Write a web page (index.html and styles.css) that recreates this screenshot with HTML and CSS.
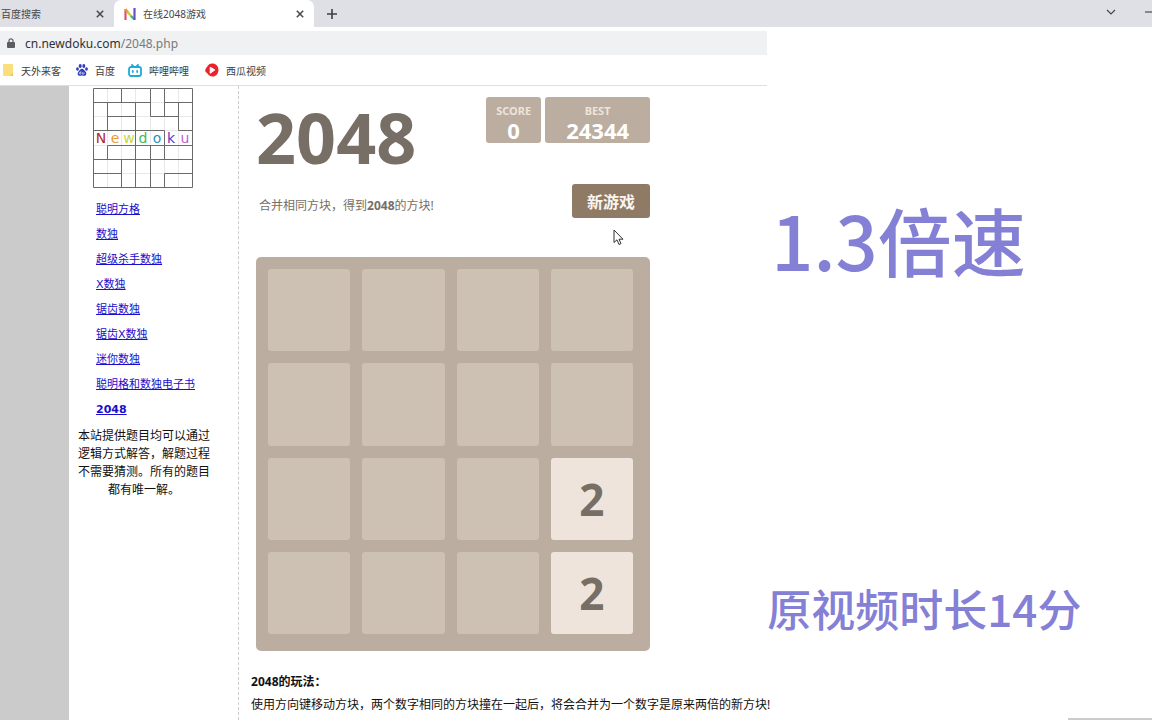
FILE: index.html
```html
<!DOCTYPE html>
<html lang="zh-CN">
<head>
<meta charset="utf-8">
<title>在线2048游戏</title>
<link rel="stylesheet" href="styles.css">
</head>
<body>
<header class="tabbar">
  <div class="tab tab-left"><span class="tab-title">百度搜索</span>
    <button class="icon-btn" aria-label="关闭标签页"><svg width="8" height="8" viewBox="0 0 8 8"><path d="M.8.8l6.4 6.4M7.2.8L.8 7.2" stroke="#45474b" stroke-width="1.5"/></svg></button>
  </div>
  <div class="tab tab-active">
    <svg class="favicon" width="12" height="12" viewBox="0 0 12 12"><path d="M1.500 12V1" stroke="#e0506a" stroke-width="2.200"/><path d="M1.500 1l3 4" stroke="#f0a030" stroke-width="2.200"/><path d="M4 4.500l3.500 4" stroke="#c8cf3c" stroke-width="2.200"/><path d="M7 8l3.500 3.500" stroke="#3dae8c" stroke-width="2.200"/><path d="M10.500 12V0" stroke="#6a50c0" stroke-width="2.200"/></svg>
    <span class="tab-title">在线2048游戏</span>
    <button class="icon-btn" aria-label="关闭标签页"><svg width="8" height="8" viewBox="0 0 8 8"><path d="M.8.8l6.400 6.400M7.200.8L.8 7.200" stroke="#45474b" stroke-width="1.500"/></svg></button>
  </div>
  <button class="icon-btn new-tab" aria-label="新标签页"><svg width="10" height="10" viewBox="0 0 10 10"><path d="M5 0v10M0 5h10" stroke="#3c3e42" stroke-width="1.600"/></svg></button>
  <div class="window-controls">
    <button class="icon-btn" aria-label="搜索标签页"><svg width="10" height="6" viewBox="0 0 10 6"><path d="M1 1l4 4 4-4" fill="none" stroke="#45474b" stroke-width="1.200"/></svg></button>
    <button class="icon-btn" aria-label="最小化"><svg width="7" height="6" viewBox="0 0 7 6"><path d="M0 3h7" stroke="#55575c" stroke-width="1.300"/></svg></button>
  </div>
</header>
<div class="stage">
  <div class="browser">
    <div class="address">
      <svg width="8" height="10" viewBox="0 0 8 10"><rect y="4" width="8" height="6" rx="1" fill="#5a5d61"/><path d="M2 4.500V2.800a2 2 0 0 1 4 0v1.700" fill="none" stroke="#5a5d61" stroke-width="1.200"/></svg>
      <span class="url">cn.newdoku.com<span class="url-path">/2048.php</span></span>
    </div>
    <nav class="bookmarks">
      <a href="#" class="bm bm-folder"><svg width="10" height="12" viewBox="0 0 10 12"><rect width="10" height="12" rx="1" fill="#fbdf7c"/><path d="M6.500 12h3.500V9z" fill="#eec75c"/></svg>天外来客</a>
      <a href="#" class="bm bm-baidu"><svg width="12" height="12" viewBox="0 0 12 12" fill="#2f3cc0"><ellipse cx="4.200" cy="2" rx="1.500" ry="2"/><ellipse cx="7.800" cy="2" rx="1.500" ry="2"/><ellipse cx="1.500" cy="5" rx="1.400" ry="1.800"/><ellipse cx="10.500" cy="5" rx="1.400" ry="1.800"/><path d="M6 4.700c1.600 0 2.200 1.600 3.400 2.700 1.700 1.600 1 4.400-1.200 4.400-1 0-1.300-.3-2.200-.3s-1.200.3-2.200.3c-2.200 0-2.900-2.800-1.200-4.400C3.800 6.300 4.400 4.700 6 4.700z"/><path d="M4.900 7.200v2.900H4a.8.8 0 0 1 0-1.700h.9M6.500 8.200v1.900H8V8.200" stroke="#fff" stroke-width=".6" fill="none"/></svg>百度</a>
      <a href="#" class="bm bm-bili"><svg width="14" height="13" viewBox="0 0 14 13" fill="none" stroke="#22a9d6" stroke-width="1.800" stroke-linecap="round"><rect x="1" y="3" width="12" height="9" rx="2"/><path d="M4 1l1.500 1.500M10 1L8.500 2.500M4.800 6.800v1.200M9.200 6.800v1.200"/></svg>哔哩哔哩</a>
      <a href="#" class="bm"><svg width="14" height="14" viewBox="0 0 14 14"><path d="M7 .5C11 .5 13.500 3.200 13.500 7S10.500 13.700 7.500 13.500C3.500 13.300 2.800 10.300 1.500 9.500-.5 8.300.3 6 1.200 5 2.500 3.500 3.500.5 7 .5z" fill="#e8232b"/><path d="M5.200 4.300l4.600 2.600-4.600 3.400z" fill="#fff" stroke="#fff" stroke-width="1" stroke-linejoin="round"/></svg>西瓜视频</a>
    </nav>
    <div class="page">
      <aside class="sidebar">
        <svg class="logo" width="100" height="100" viewBox="0 0 100 100">
          <g transform="translate(.5 .5)" fill="none">
            <path d="M14 0v99M28 0v99M42 0v99M57 0v99M71 0v99M85 0v99M0 14h99M0 28h99M0 42h99M0 57h99M0 71h99M0 85h99" stroke="#e8e8e8"/>
            <path d="M0 0h99v99H0zM0 14h57M71 14h28M14 28h28M57 28h28M0 42h71M85 42h14M14 57h85M0 71h99M0 85h28M71 85h28M14 14v28M14 57v14M28 0v14M28 71v28M42 14v85M57 0v28M57 57v42M71 0v28M71 42v29M71 85v14M85 14v28" stroke="#6a6a6a"/>
          </g>
          <g class="logo-text"><text x="8" y="55" fill="#b3262b">N</text><text x="22" y="55" fill="#e89a3c">e</text><text x="36" y="55" fill="#cdd435">w</text><text x="50" y="55" fill="#3fba5a">d</text><text x="64" y="55" fill="#2b93b8">o</text><text x="78" y="55" fill="#6038b8">k</text><text x="92" y="55" fill="#c65bd0">u</text></g>
        </svg>
        <ul class="links">
          <li><a href="#">聪明方格</a></li>
          <li><a href="#">数独</a></li>
          <li><a href="#">超级杀手数独</a></li>
          <li><a href="#">X数独</a></li>
          <li><a href="#">锯齿数独</a></li>
          <li><a href="#">锯齿X数独</a></li>
          <li><a href="#">迷你数独</a></li>
          <li><a href="#">聪明格和数独电子书</a></li>
          <li><a href="#" class="current">2048</a></li>
        </ul>
        <p class="note">本站提供题目均可以通过<br>逻辑方式解答，解题过程<br>不需要猜测。所有的题目<br>都有唯一解。</p>
      </aside>
      <main class="content">
        <div class="game">
          <div class="heading">
            <h1>2048</h1>
            <div class="scores">
              <div class="score"><span class="score-label">SCORE</span><span class="score-value">0</span></div>
              <div class="score score-best"><span class="score-label">BEST</span><span class="score-value">24344</span></div>
            </div>
          </div>
          <div class="above">
            <p class="intro">合并相同方块，得到<strong>2048</strong>的方块!</p>
            <div class="restart">
              <button class="new-game">新游戏</button>
              <svg class="pointer" width="11" height="17" viewBox="0 0 11 17"><path d="M1 1v12.500l3-2.700 2 4.700 2-.9-2-4.400h4z" fill="#fff" stroke="#333" stroke-width="1"/></svg>
            </div>
          </div>
          <div class="board">
            <div class="cell"></div><div class="cell"></div><div class="cell"></div><div class="cell"></div>
            <div class="cell"></div><div class="cell"></div><div class="cell"></div><div class="cell"></div>
            <div class="cell"></div><div class="cell"></div><div class="cell"></div><div class="cell tile">2</div>
            <div class="cell"></div><div class="cell"></div><div class="cell"></div><div class="cell tile">2</div>
          </div>
        </div>
        <section class="howto">
          <h2>2048的玩法：</h2>
          <p>使用方向键移动方块，两个数字相同的方块撞在一起后，将会合并为一个数字是原来两倍的新方块!</p>
        </section>
      </main>
    </div>
  </div>
  <div class="captions">
    <p class="caption speed">1.3倍速</p>
    <p class="caption length">原视频时长14分</p>
    <div class="edge"></div>
  </div>
</div>
</body>
</html>
```
FILE: styles.css
```css
* { box-sizing: border-box; }
body {
  margin: 0;
  height: 100vh;
  overflow: hidden;
  display: flex;
  flex-direction: column;
  background: #fff;
  color: #111;
  font-family: "Noto Sans", "Noto Sans CJK SC", sans-serif;
  font-size: 12px;
}
p, h1, h2, ul { margin: 0; padding: 0; }
svg { display: block; flex: none; }
.icon-btn { border: 0; background: none; padding: 0; display: block; }

.tabbar { display: flex; align-items: center; height: 27px; background: #dee0e5; flex: none; }
.tab { display: flex; align-items: center; height: 27px; font-size: 10px; color: #44464a; }
.tab-title { flex: 1; white-space: nowrap; }
.tab-left { width: 114px; padding: 0 10px 0 1px; }
.tab-active { width: 200px; padding: 0 10px; gap: 7px; background: #fff; border-radius: 7px 7px 0 0; }
.new-tab { margin-left: 13px; }
.window-controls { margin-left: auto; display: flex; align-items: center; gap: 29px; }
.window-controls .icon-btn { padding-bottom: 4px; }

.stage { flex: 1; display: flex; min-height: 0; }
.browser { flex: 0 0 66.6%; display: flex; flex-direction: column; min-width: 0; }
.address {
  display: flex; align-items: center; gap: 10px; height: 24px; flex: none;
  margin-top: 4px; padding-left: 7px; background: #f0f1f3; color: #303236;
}
.url-path { color: #77797d; }
.bookmarks {
  display: flex; align-items: center; height: 31px; flex: none;
  padding-left: 3px; border-bottom: 1px solid #dfdfe1; font-size: 10px;
}
.bm { display: flex; align-items: center; gap: 7px; margin-right: 16px; color: #3c3e42; text-decoration: none; }
.bm-folder { gap: 8px; margin-right: 15px; }
.bm-baidu { margin-right: 13px; }

.page { flex: 1; display: flex; min-height: 0; padding-left: 9%; background: linear-gradient(to right, #cbcbcb 9%, #fff 9%); }
.sidebar { width: 170px; flex: none; border-right: 1px dashed #ccc; }
.logo { margin: 2px 0 0 24px; }
.logo-text { font: 14px "DejaVu Sans", sans-serif; text-anchor: middle; }
.links { list-style: none; padding: 9px 0 0 27px; font: 11px/25px "DejaVu Sans", "Noto Sans CJK SC", sans-serif; }
.links a { color: #1a0dcb; }
.links .current { font-weight: bold; }
.note { width: 150px; text-align: center; font-size: 12px; line-height: 18px; margin: 5px 0 0; white-space: nowrap; }

.content { flex: 1; min-width: 0; padding: 11px 0 0 17px; }
.game { width: 394px; color: #776e65; }
.heading { display: flex; justify-content: space-between; align-items: flex-start; }
h1 { font-size: 70px; line-height: 80px; font-weight: bold; }
.scores { display: flex; gap: 4px; }
.score {
  display: flex; flex-direction: column; align-items: center; height: 46px;
  padding: 7px 10px 0; border-radius: 3px; background: #bbada0; color: #fff; font-weight: bold;
}
.score-best { padding: 7px 21px 0; }
.score-label { font-size: 11px; line-height: 14px; color: #eee4da; }
.score-value { font-size: 22px; line-height: 24px; }
.above { display: flex; justify-content: space-between; align-items: center; margin-top: 7px; }
.intro { padding: 8px 0 0 3px; }
.restart { position: relative; }
.new-game {
  display: block; border: 0; border-radius: 3px; height: 34px; padding: 0 15px;
  background: #8f7a66; color: #f9f6f2; font: bold 16px "Noto Sans", "Noto Sans CJK SC", sans-serif;
}
.pointer { position: absolute; left: 41px; top: 45px; }
.board {
  display: grid; grid-template-columns: repeat(4, 1fr); gap: 12px;
  margin-top: 39px; padding: 12px 17px 17px 12px; border-radius: 5px; background: #bbada0;
}
.cell { aspect-ratio: 1; border-radius: 3px; background: #cdc1b4; }
.tile { display: flex; align-items: center; justify-content: center; background: #eee4dc; font-size: 44px; font-weight: bold; line-height: 1; }
.howto { margin: 19px 0 0 -5px; white-space: nowrap; line-height: 23px; }
.howto h2 { font-size: 12px; line-height: 23px; }

.captions { flex: 1; min-width: 0; display: flex; flex-direction: column; }
.caption { color: #8480d6; font-family: "Noto Sans CJK SC", sans-serif; font-weight: 500; white-space: nowrap; }
.speed { font-size: 74px; line-height: 100px; padding: 162px 0 0 4px; }
.length { font-size: 44px; line-height: 60px; margin-top: 289px; }
.edge { width: 84px; height: 2px; background: #ccc; margin: auto 0 0 auto; }
```
